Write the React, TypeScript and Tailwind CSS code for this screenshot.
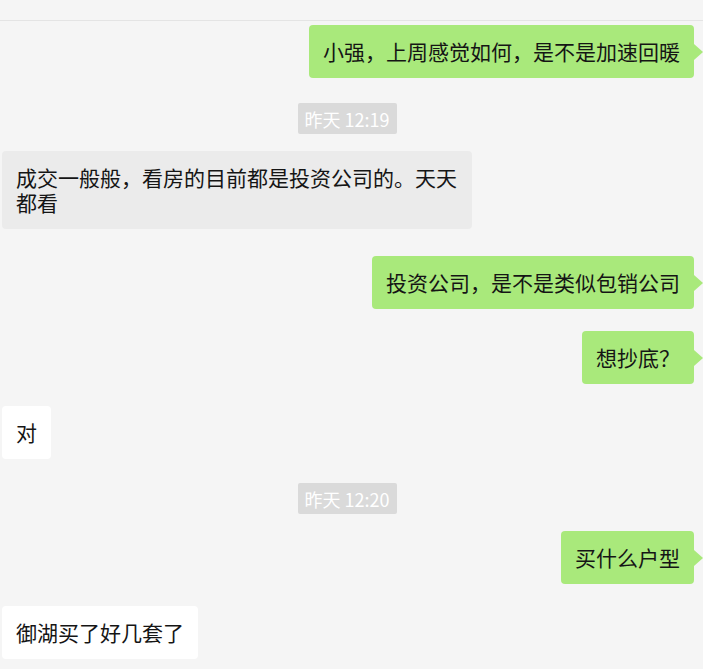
import React from "react";

type Msg =
  | { kind: "time"; text: string; mt: string }
  | { kind: "me"; text: string; mt: string }
  | { kind: "them"; text: string; mt: string; tone?: "gray" | "white" };

const messages: Msg[] = [
  { kind: "me", text: "小强，上周感觉如何，是不是加速回暖", mt: "mt-[4px]" },
  { kind: "time", text: "昨天 12:19", mt: "mt-[25px]" },
  {
    kind: "them",
    text: "成交一般般，看房的目前都是投资公司的。天天都看",
    mt: "mt-[17px]",
    tone: "gray",
  },
  { kind: "me", text: "投资公司，是不是类似包销公司", mt: "mt-[27px]" },
  { kind: "me", text: "想抄底？", mt: "mt-[22px]" },
  { kind: "them", text: "对", mt: "mt-[22px]" },
  { kind: "time", text: "昨天 12:20", mt: "mt-[24px]" },
  { kind: "me", text: "买什么户型", mt: "mt-[17px]" },
  { kind: "them", text: "御湖买了好几套了", mt: "mt-[22px]" },
];

const font = {
  fontFamily: '"Noto Sans CJK SC", "Noto Sans", sans-serif',
};

function TimeStamp({ text, mt }: { text: string; mt: string }) {
  return (
    <div className={`${mt} flex justify-center pr-[9px]`}>
      <span className="flex h-[31px] items-center rounded-[2px] bg-[#dadada] px-[7px] text-[18px] leading-none text-white">
        {text}
      </span>
    </div>
  );
}

function MyBubble({ text, mt }: { text: string; mt: string }) {
  return (
    <div className={`${mt} flex justify-end pr-[9px]`}>
      <div className="relative max-w-[470px] rounded-[4px] bg-[#a9e97b] px-[14px] py-[14px] text-[21px] leading-[25px] text-[#151515]">
        {text}
        <span className="absolute left-full top-1/2 h-0 w-0 -translate-y-1/2 border-y-[8px] border-l-[9px] border-y-transparent border-l-[#a9e97b]" />
      </div>
    </div>
  );
}

function TheirBubble({
  text,
  mt,
  tone,
}: {
  text: string;
  mt: string;
  tone?: "gray" | "white";
}) {
  const bg = tone === "gray" ? "bg-[#ebebeb]" : "bg-white";
  return (
    <div className={`${mt} flex justify-start pl-[2px]`}>
      <div
        className={`${bg} max-w-[470px] rounded-[4px] px-[14px] py-[14px] text-[21px] leading-[25px] text-[#151515]`}
      >
        {text}
      </div>
    </div>
  );
}

export default function App() {
  return (
    <div
      className="h-[669px] w-[703px] overflow-hidden bg-[#f5f5f5]"
      style={font}
    >
      <div className="h-[21px] border-b border-[#e4e4e4]" />
      <div className="flex flex-col">
        {messages.map((m, i) => {
          if (m.kind === "time") return <TimeStamp key={i} text={m.text} mt={m.mt} />;
          if (m.kind === "me") return <MyBubble key={i} text={m.text} mt={m.mt} />;
          return <TheirBubble key={i} text={m.text} mt={m.mt} tone={m.tone} />;
        })}
      </div>
    </div>
  );
}
